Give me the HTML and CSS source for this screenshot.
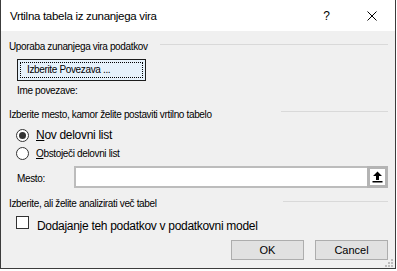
FILE: index.html
```html
<!DOCTYPE html>
<html lang="sl">
<head>
<meta charset="utf-8">
<title>Vrtilna tabela iz zunanjega vira</title>
<link rel="stylesheet" href="styles.css">
</head>
<body>
<div class="dialog">
  <div class="titlebar">
    <span class="title">Vrtilna tabela iz zunanjega vira</span>
    <span class="help">?</span>
    <svg class="close" width="10" height="10" viewBox="0 0 10 10"><path d="M0.5 0.5L9.5 9.5M9.5 0.5L0.5 9.5" stroke="#000" stroke-width="1" fill="none"/></svg>
  </div>
  <div class="content">
    <div class="ghead g1"><span>Uporaba zunanjega vira podatkov</span><span class="rule r1"></span></div>
    <button class="choose"><span class="focus">Izberite Povezava ...</span></button>
    <div class="ime">Ime povezave:</div>
    <div class="ghead g2"><span>Izberite mesto, kamor želite postaviti vrtilno tabelo</span><span class="rule r2"></span></div>
    <div class="radio big"><span class="dot"><span class="pip"></span></span><span><u>N</u>ov delovni list</span></div>
    <div class="radio small"><span class="dot"></span><span><u>O</u>bstoječi delovni list</span></div>
    <div class="mesto">
      <span class="mlabel">Mesto:</span>
      <span class="field"></span>
      <span class="pick"><svg width="11" height="12" viewBox="0 0 11 12"><path d="M5.5 0.5L10 5H7V9H4V5H1Z" fill="#000"/><rect x="0.5" y="10" width="10" height="1.5" fill="#000"/></svg></span>
    </div>
    <div class="ghead g3"><span>Izberite, ali želite analizirati več tabel</span><span class="rule r3"></span></div>
    <div class="check"><span class="box"></span><span>Dodajanje teh podatkov v podatkovni model</span></div>
    <div class="actions">
      <button class="btn">OK</button>
      <button class="btn">Cancel</button>
    </div>
  </div>
  <svg class="grip" width="10" height="10" viewBox="0 0 10 10">
    <rect x="0" y="7" width="2" height="2" fill="#bdbdbd"/>
    <rect x="3" y="7" width="2" height="2" fill="#bdbdbd"/>
    <rect x="6" y="7" width="2" height="2" fill="#bdbdbd"/>
    <rect x="3" y="4" width="2" height="2" fill="#bdbdbd"/>
    <rect x="6" y="4" width="2" height="2" fill="#bdbdbd"/>
    <rect x="6" y="1" width="2" height="2" fill="#bdbdbd"/>
  </svg>
</div>
</body>
</html>
```

FILE: styles.css
```css
* { box-sizing: border-box; }
html, body { margin: 0; padding: 0; background: #fff; }
body {
  font-family: "Liberation Sans", Arial, sans-serif;
  color: #000;
}
.dialog {
  position: relative;
  width: 396px;
  height: 269px;
  border: 1px solid #3c3c3c;
  border-top: none;
  background: #f0f0f0;
  display: flex;
  flex-direction: column;
}
.titlebar {
  height: 31px;
  background: #fff;
  display: flex;
  align-items: center;
  padding-left: 9px;
  padding-right: 18px;
}
.title {
  font-size: 11.5px;
  letter-spacing: -0.3px;
}
.help {
  margin-left: auto;
  font-size: 12px;
  line-height: 12px;
}
.close {
  margin-left: 37px;
  display: block;
}
.content {
  flex: 1;
  display: flex;
  flex-direction: column;
  padding: 0 7px 0 8px;
  font-size: 10px;
  letter-spacing: -0.35px;
}
.ghead {
  display: flex;
  align-items: flex-start;
  height: 17px;
  line-height: 17px;
  white-space: nowrap;
}
.g1 { margin-top: 7px; }
.g2 { margin-top: 6px; }
.g3 { margin-top: 8px; height: 16px; line-height: 16px; }
.rule {
  margin-left: auto;
  height: 1px;
  background: #d9d9d9;
}
.r1 { width: 228px; margin-top: 6px; }
.r2 { width: 107px; margin-top: 5px; }
.r3 { width: 105px; margin-top: 5px; }
.choose {
  margin: 4px 0 0 8px;
  width: 129px;
  height: 22px;
  padding: 2px;
  border: 1px solid #1c1c1c;
  background: #e5f1fb;
  font: inherit;
  letter-spacing: inherit;
  text-align: left;
  display: flex;
}
.focus {
  flex: 1;
  border: 1px dotted #000;
  padding-left: 6px;
  line-height: 14px;
}
.ime {
  margin-top: 1px;
  height: 18px;
  line-height: 18px;
  padding-left: 8px;
}
.radio {
  display: flex;
  align-items: center;
  gap: 7px;
  padding-left: 7px;
}
.radio.big {
  margin-top: 3px;
  height: 18px;
  font-size: 12px;
  letter-spacing: -0.3px;
}
.radio.small {
  margin-top: 1px;
  height: 17px;
}
.dot {
  width: 13px;
  height: 13px;
  border: 1px solid #333;
  border-radius: 50%;
  background: #fff;
  display: flex;
  align-items: center;
  justify-content: center;
  flex: none;
}
.pip {
  width: 7px;
  height: 7px;
  border-radius: 50%;
  background: #333;
}
.mesto {
  margin-top: 4px;
  height: 22px;
  display: flex;
}
.mlabel {
  width: 65px;
  padding-left: 8px;
  padding-top: 4px;
  line-height: 18px;
}
.field {
  flex: 1;
  background: #fff;
  border: 2px solid #bcbcbc;
  border-right: none;
}
.pick {
  width: 21px;
  border: 3px solid #b4b4b4;
  background: #fff;
  display: flex;
  align-items: center;
  justify-content: center;
}
.pick svg { display: block; }
.check {
  margin-top: 4px;
  height: 20px;
  display: flex;
  align-items: flex-start;
  gap: 8px;
  padding-left: 7px;
  font-size: 12px;
  letter-spacing: -0.3px;
  line-height: 20px;
}
.box {
  width: 13px;
  height: 13px;
  border: 1px solid #333;
  background: #fff;
  flex: none;
}
.actions {
  margin-top: 4px;
  display: flex;
  justify-content: flex-end;
  gap: 11px;
}
.btn {
  width: 73px;
  height: 20px;
  background: #e1e1e1;
  border: 1px solid #adadad;
  font-family: inherit;
  font-size: 11px;
  letter-spacing: 0;
  padding: 0;
  color: #000;
}
.grip {
  position: absolute;
  right: 0;
  bottom: 0;
}
```
